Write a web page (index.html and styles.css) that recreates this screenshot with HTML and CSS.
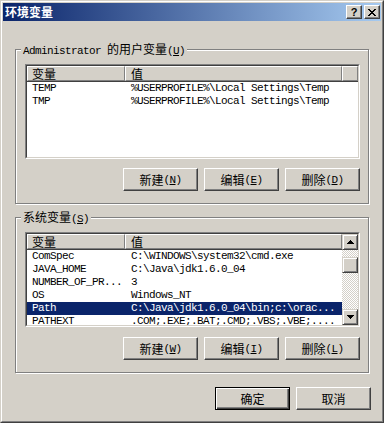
FILE: index.html
```html
<!DOCTYPE html>
<html lang="zh-CN">
<head>
    <meta charset="UTF-8">
    <title>环境变量</title>
    <link rel="stylesheet" href="styles.css">
</head>
<body>
    <div class="window">
        <div class="frame">
            <div class="titlebar">
                <span class="title">环境变量</span>
                <div class="caption-btns">
                    <span class="cap-btn help">?</span>
                    <span class="cap-btn close">
                        <svg width="8" height="7" viewBox="0 0 8 7" shape-rendering="crispEdges">
                            <rect x="0" y="0" width="2" height="1"/><rect x="6" y="0" width="2" height="1"/>
                            <rect x="1" y="1" width="2" height="1"/><rect x="5" y="1" width="2" height="1"/>
                            <rect x="2" y="2" width="4" height="1"/>
                            <rect x="3" y="3" width="2" height="1"/>
                            <rect x="2" y="4" width="4" height="1"/>
                            <rect x="1" y="5" width="2" height="1"/><rect x="5" y="5" width="2" height="1"/>
                            <rect x="0" y="6" width="2" height="1"/><rect x="6" y="6" width="2" height="1"/>
                        </svg>
                    </span>
                </div>
            </div>

            <div class="content">
                <div class="group">
                    <span class="legend"><span class="en">Administrator </span>的用户变量<span class="en">(<u>U</u>)</span></span>
                    <div class="listview">
                        <div class="lv-inner">
                            <div class="lv-main">
                                <div class="lv-head">
                                    <span class="hcol c1">变量</span>
                                    <span class="hcol c2">值</span>
                                    <span class="hcol fill"></span>
                                </div>
                                <div class="lv-row"><span class="c1">TEMP</span><span class="c2">%USERPROFILE%\Local Settings\Temp</span></div>
                                <div class="lv-row"><span class="c1">TMP</span><span class="c2">%USERPROFILE%\Local Settings\Temp</span></div>
                            </div>
                        </div>
                    </div>
                    <div class="btn-row">
                        <button class="btn">新建<span class="en">(<u>N</u>)</span></button>
                        <button class="btn">编辑<span class="en">(<u>E</u>)</span></button>
                        <button class="btn">删除<span class="en">(<u>D</u>)</span></button>
                    </div>
                </div>

                <div class="group sys">
                    <span class="legend">系统变量<span class="en">(<u>S</u>)</span></span>
                    <div class="listview">
                        <div class="lv-inner">
                            <div class="lv-main">
                                <div class="lv-head">
                                    <span class="hcol c1">变量</span>
                                    <span class="hcol c2">值</span>
                                </div>
                                <div class="lv-row"><span class="c1">ComSpec</span><span class="c2">C:\WINDOWS\system32\cmd.exe</span></div>
                                <div class="lv-row"><span class="c1">JAVA_HOME</span><span class="c2">C:\Java\jdk1.6.0_04</span></div>
                                <div class="lv-row"><span class="c1">NUMBER_OF_PR...</span><span class="c2">3</span></div>
                                <div class="lv-row"><span class="c1">OS</span><span class="c2">Windows_NT</span></div>
                                <div class="lv-row selected"><span class="c1">Path</span><span class="c2">C:\Java\jdk1.6.0_04\bin;c:\orac...</span></div>
                                <div class="lv-row"><span class="c1">PATHEXT</span><span class="c2">.COM;.EXE;.BAT;.CMD;.VBS;.VBE;....</span></div>
                            </div>
                            <div class="scrollbar">
                                <span class="sb-btn">
                                    <svg width="7" height="4" shape-rendering="crispEdges"><rect x="3" y="0" width="1" height="1"/><rect x="2" y="1" width="3" height="1"/><rect x="1" y="2" width="5" height="1"/><rect x="0" y="3" width="7" height="1"/></svg>
                                </span>
                                <span class="sb-gap"></span>
                                <span class="sb-btn thumb"></span>
                                <span class="sb-track"></span>
                                <span class="sb-btn">
                                    <svg width="7" height="4" shape-rendering="crispEdges"><rect x="0" y="0" width="7" height="1"/><rect x="1" y="1" width="5" height="1"/><rect x="2" y="2" width="3" height="1"/><rect x="3" y="3" width="1" height="1"/></svg>
                                </span>
                            </div>
                        </div>
                    </div>
                    <div class="btn-row">
                        <button class="btn">新建<span class="en">(<u>W</u>)</span></button>
                        <button class="btn">编辑<span class="en">(<u>I</u>)</span></button>
                        <button class="btn">删除<span class="en">(<u>L</u>)</span></button>
                    </div>
                </div>

                <div class="footer">
                    <button class="btn default">确定</button>
                    <button class="btn">取消</button>
                </div>
            </div>
        </div>
    </div>
</body>
</html>
```

FILE: styles.css
```css
body {
    margin: 0;
    background: #d4d0c8;
    font-family: "Noto Sans CJK SC", sans-serif;
    font-size: 12px;
    color: #000;
}
.en {
    font-family: "Liberation Mono", "DejaVu Sans Mono", monospace;
    font-size: 11px;
    letter-spacing: -0.6px;
}
.window {
    width: 384px;
    height: 423px;
    box-sizing: border-box;
    border: 1px solid;
    border-color: #d4d0c8 #404040 #404040 #d4d0c8;
    background: #d4d0c8;
}
.frame {
    height: 100%;
    box-sizing: border-box;
    border: 1px solid;
    border-color: #fff #808080 #808080 #fff;
    padding: 1px;
}
.titlebar {
    height: 18px;
    display: flex;
    align-items: center;
    justify-content: space-between;
    background: linear-gradient(to right, #0a246a, #a6caf0);
    padding: 0 1px 0 2px;
}
.title {
    color: #fff;
    font-weight: bold;
    font-size: 12px;
    line-height: 14px;
}
.caption-btns {
    display: flex;
    gap: 2px;
}
.cap-btn {
    box-sizing: border-box;
    width: 16px;
    height: 14px;
    display: flex;
    align-items: center;
    justify-content: center;
    background: #d4d0c8;
    border: 1px solid;
    border-color: #fff #404040 #404040 #fff;
    box-shadow: inset -1px -1px #808080;
}
.help {
    font-family: "Liberation Sans", sans-serif;
    font-weight: bold;
    font-size: 11px;
    line-height: 11px;
}
.content {
    padding: 0 10px 0 12px;
}
.group {
    position: relative;
    box-sizing: border-box;
    width: 354px;
    height: 155px;
    margin-top: 28px;
    padding: 14px 8px 0 9px;
    border: 1px solid #808080;
    box-shadow: inset 1px 1px #fff, 1px 1px #fff;
}
.group.sys {
    height: 156px;
    margin-top: 13px;
}
.legend {
    position: absolute;
    top: -9px;
    left: 5px;
    padding: 0 2px;
    line-height: 16px;
    background: #d4d0c8;
}
.listview {
    box-sizing: border-box;
    width: 335px;
    height: 95px;
    border: 1px solid;
    border-color: #808080 #fff #fff #808080;
}
.lv-inner {
    box-sizing: border-box;
    height: 100%;
    display: flex;
    border: 1px solid;
    border-color: #404040 #d4d0c8 #d4d0c8 #404040;
    background: #fff;
    overflow: hidden;
}
.lv-main {
    flex: 1;
    min-width: 0;
}
.lv-head {
    display: flex;
    height: 16px;
    border-bottom: 1px solid #404040;
    box-sizing: border-box;
    background: #d4d0c8;
}
.hcol {
    box-sizing: border-box;
    height: 15px;
    line-height: 13px;
    padding-left: 4px;
    border: 1px solid;
    border-color: #fff #808080 #808080 #fff;
}
.c1 {
    width: 98px;
    flex: none;
}
.c2 {
    width: 217px;
    flex: none;
}
.hcol.c2 {
    padding-left: 5px;
}
.hcol.fill {
    flex: 1;
}
.lv-row {
    display: flex;
    height: 13px;
    line-height: 13px;
    font-family: "Liberation Mono", "DejaVu Sans Mono", monospace;
    font-size: 11px;
    letter-spacing: -0.6px;
    white-space: pre;
    width: 315px;
}
.lv-row span {
    overflow: hidden;
}
.lv-row .c1 {
    padding-left: 5px;
    box-sizing: border-box;
}
.lv-row .c2 {
    padding-left: 6px;
    box-sizing: border-box;
}
.lv-row:first-of-type,
.lv-head + .lv-row {
    margin-top: 0;
}
.lv-row.selected {
    background: #0a246a;
    color: #fff;
}
.scrollbar {
    width: 16px;
    flex: none;
    display: flex;
    flex-direction: column;
    background: repeating-conic-gradient(#fff 0 25%, #d4d0c8 0 50%) 0 0 / 2px 2px;
}
.sb-btn {
    box-sizing: border-box;
    width: 16px;
    height: 16px;
    flex: none;
    display: flex;
    align-items: center;
    justify-content: center;
    background: #d4d0c8;
    border: 1px solid;
    border-color: #d4d0c8 #404040 #404040 #d4d0c8;
    box-shadow: inset 1px 1px #fff, inset -1px -1px #808080;
}
.sb-gap {
    height: 7px;
    flex: none;
}
.sb-track {
    flex: 1;
}
.btn-row {
    display: flex;
    justify-content: flex-end;
    gap: 6px;
    margin-top: 9px;
}
.sys .btn-row {
    margin-top: 10px;
}
.btn {
    box-sizing: border-box;
    width: 75px;
    height: 23px;
    padding: 0;
    display: flex;
    align-items: center;
    justify-content: center;
    font-family: "Noto Sans CJK SC", sans-serif;
    font-size: 12px;
    color: #000;
    background: #d4d0c8;
    border: 1px solid;
    border-color: #fff #404040 #404040 #fff;
    box-shadow: inset -1px -1px #808080;
}
.btn.default {
    border-color: #000;
    box-shadow: inset 1px 1px #fff, inset -1px -1px #404040, inset -2px -2px #808080;
}
.footer {
    display: flex;
    justify-content: flex-end;
    gap: 6px;
    margin-top: 14px;
}
```
